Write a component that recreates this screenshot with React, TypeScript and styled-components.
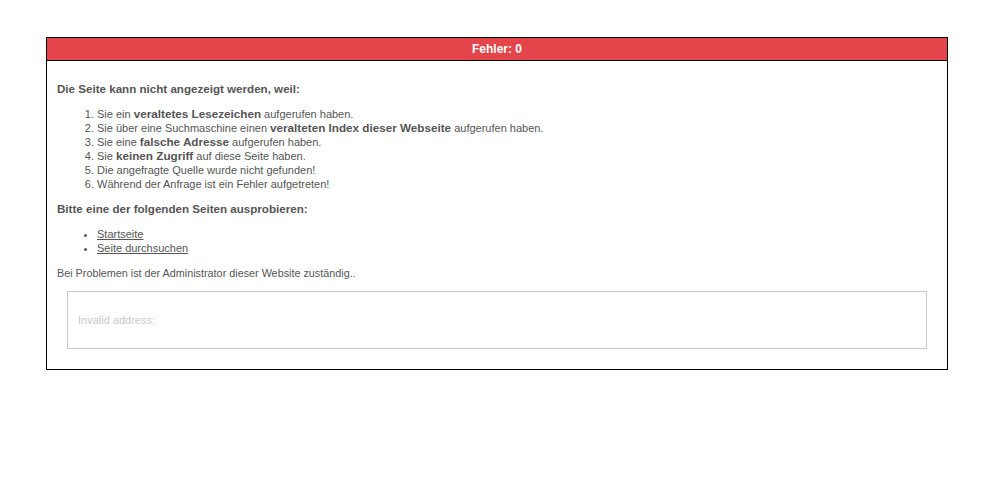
import React from "react";
import styled, { createGlobalStyle } from "styled-components";

const Global = createGlobalStyle`
  html, body { margin: 0; padding: 0; background: #fff; }
  body { font-family: Arial, "Liberation Sans", sans-serif; font-size: 11px; color: #555; }
`;

const Panel = styled.div`
  width: 900px;
  margin: 37px 0 0 46px;
  border: 1px solid #000;
  background: #fff;
`;

const Header = styled.div`
  height: 22px;
  line-height: 22px;
  background: #e3454b;
  border-bottom: 1px solid #000;
  color: #fff;
  font-weight: bold;
  font-size: 12px;
  text-align: center;
`;

const Body = styled.div`
  padding: 20px 10px 20px 10px;
`;

const Heading = styled.p`
  margin: 0 0 10px;
  font-weight: bold;
  font-size: 11.6px;
  line-height: 16px;
`;

const Numbered = styled.ol`
  margin: 0 0 10px;
  padding-left: 40px;
  font-size: 11px;
  line-height: 14px;
`;

const Strong = styled.b`
  font-weight: bold;
  font-size: 11.7px;
  line-height: 14px;
`;

const Bulleted = styled.ul`
  margin: 0 0 11px;
  padding-left: 40px;
  font-size: 11px;
  line-height: 14px;
`;

const Link = styled.a`
  color: #555;
  text-decoration: underline;
`;

const Note = styled.p`
  margin: 0 0 11px;
  font-size: 10.8px;
  line-height: 14px;
`;

const AddressBox = styled.div`
  margin: 0 10px;
  border: 1px solid #ccc;
  height: 56px;
  display: flex;
  align-items: center;
  padding: 0 10px;
  color: #c8c8c8;
  font-size: 11px;
`;

export default function App() {
  return (
    <>
      <Global />
      <Panel>
        <Header>Fehler: 0</Header>
        <Body>
          <Heading>Die Seite kann nicht angezeigt werden, weil:</Heading>
          <Numbered>
            <li>Sie ein <Strong>veraltetes Lesezeichen</Strong> aufgerufen haben.</li>
            <li>Sie über eine Suchmaschine einen <Strong>veralteten Index dieser Webseite</Strong> aufgerufen haben.</li>
            <li>Sie eine <Strong>falsche Adresse</Strong> aufgerufen haben.</li>
            <li>Sie <Strong>keinen Zugriff</Strong> auf diese Seite haben.</li>
            <li>Die angefragte Quelle wurde nicht gefunden!</li>
            <li>Während der Anfrage ist ein Fehler aufgetreten!</li>
          </Numbered>
          <Heading>Bitte eine der folgenden Seiten ausprobieren:</Heading>
          <Bulleted>
            <li><Link href="#">Startseite</Link></li>
            <li><Link href="#">Seite durchsuchen</Link></li>
          </Bulleted>
          <Note>Bei Problemen ist der Administrator dieser Website zuständig..</Note>
          <AddressBox>Invalid address:</AddressBox>
        </Body>
      </Panel>
    </>
  );
}
